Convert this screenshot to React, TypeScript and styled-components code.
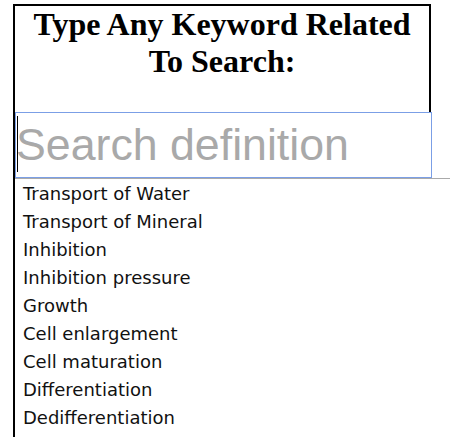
import { createGlobalStyle } from 'styled-components'
import styled from 'styled-components'

const GlobalStyle = createGlobalStyle`
  html, body {
    margin: 0;
    padding: 0;
    background: #fff;
    overflow: hidden;
  }
`

const Wrapper = styled.div`
  margin: 4px 0 0 13px;
  width: 414px;
  height: 431px;
  border: 2px solid #000;
  border-bottom: none;
`

const Title = styled.h1`
  margin: 0 0 32px 0;
  font-family: "Liberation Serif", "Times New Roman", serif;
  font-size: 32px;
  font-weight: bold;
  text-align: center;
  color: #000;
`

const InputWrap = styled.div`
  position: relative;
  width: 417px;
`

const SearchInput = styled.input`
  display: block;
  box-sizing: border-box;
  width: 100%;
  height: 66px;
  margin: 0;
  padding: 1px 0;
  border: 1px solid #7b9fe6;
  outline: none;
  background: #fff;
  font-family: "Liberation Sans", Arial, sans-serif;
  font-size: 44.7px;
  color: #000;
  caret-color: transparent;
  &::placeholder {
    color: #a9a9a9;
  }
`

const Caret = styled.span`
  position: absolute;
  left: 2px;
  top: 4px;
  width: 1px;
  height: 56px;
  background: #000;
`

const List = styled.ul`
  list-style: none;
  margin: 0;
  padding: 1px 0 6px 0;
  width: 435px;
  border-top: 1px solid #aaa;
  background: #fff;
`

const Item = styled.li`
  height: 28px;
  line-height: 28px;
  padding-left: 8px;
  font-family: "DejaVu Sans", Verdana, sans-serif;
  font-size: 18px;
  color: #111;
  white-space: nowrap;
  cursor: pointer;
`

const items = [
  'Transport of Water',
  'Transport of Mineral',
  'Inhibition',
  'Inhibition pressure',
  'Growth',
  'Cell enlargement',
  'Cell maturation',
  'Differentiation',
  'Dedifferentiation',
]

export default function App() {
  return (
    <>
      <GlobalStyle />
      <Wrapper>
        <Title>Type Any Keyword Related To Search:</Title>
        <InputWrap>
          <SearchInput type="text" placeholder="Search definition" />
          <Caret />
        </InputWrap>
        <List>
          {items.map((item) => (
            <Item key={item}>{item}</Item>
          ))}
        </List>
      </Wrapper>
    </>
  )
}
